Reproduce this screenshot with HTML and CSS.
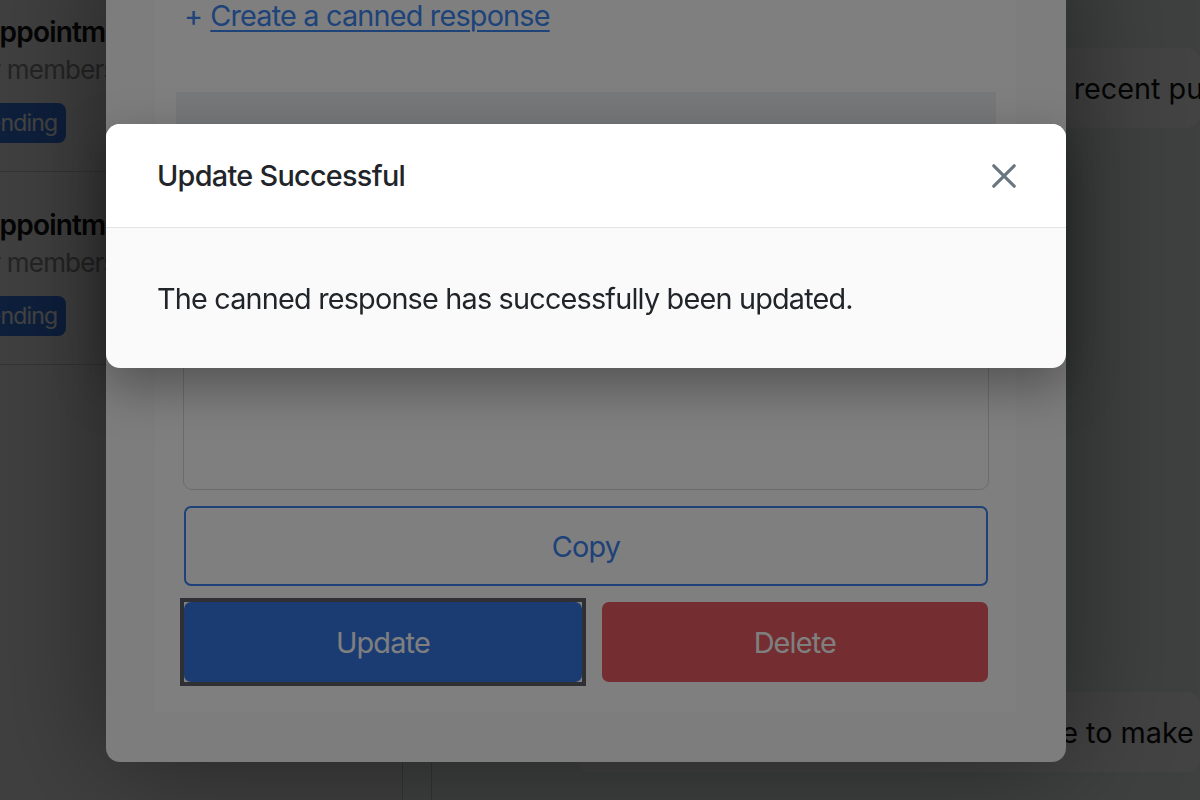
FILE: index.html
```html
<!DOCTYPE html>
<html lang="en">
<head>
<meta charset="utf-8">
<title>Canned responses</title>
<link rel="stylesheet" href="styles.css">
</head>
<body>
<div class="page">
  <aside class="sidebar">
    <div class="item-list">
      <div class="item">
        <div class="item-title">Appointment request</div>
        <div class="item-sub">For members only</div>
        <span class="badge">Pending</span>
      </div>
      <div class="item">
        <div class="item-title">Appointment request</div>
        <div class="item-sub">For members only</div>
        <span class="badge">Pending</span>
      </div>
    </div>
  </aside>
  <div class="gutter"></div>
  <main class="main">
    <div class="card card-top">View your recent purchases</div>
    <div class="card card-bottom">We would love to make it right</div>
  </main>
</div>

<div class="backdrop backdrop-1"></div>

<section class="modal modal-1">
  <div class="panel">
    <a class="create-link" href="#"><span class="plus">+</span><span class="link-text">Create a canned response</span></a>
    <div class="field-head"></div>
    <label class="field-label">Response</label>
    <div class="textarea"></div>
    <button class="btn btn-outline">Copy</button>
    <div class="btn-row">
      <div class="focus-ring"><button class="btn btn-primary">Update</button></div>
      <button class="btn btn-danger">Delete</button>
    </div>
  </div>
</section>

<div class="backdrop backdrop-2"></div>

<section class="modal modal-2">
  <header class="m2-header">
    <h5 class="m2-title">Update Successful</h5>
    <button class="close" aria-label="Close">
      <svg width="24" height="24" viewBox="0 0 24 24"><path d="M1.8 1.8L22.2 22.2M22.2 1.8L1.8 22.2" stroke="#6b7780" stroke-width="3.2" stroke-linecap="round" fill="none"/></svg>
    </button>
  </header>
  <div class="m2-body">The canned response has successfully been updated.</div>
</section>
</body>
</html>
```
FILE: styles.css
```css
* { box-sizing: border-box; }
html, body {
  margin: 0;
  width: 1200px;
  height: 800px;
  overflow: hidden;
}
body {
  font-family: Inter, "Noto Sans", sans-serif;
  letter-spacing: -0.8px;
  color: #212529;
  position: relative;
}

/* background page */
.page {
  display: flex;
  height: 800px;
  margin-left: -60px;
  width: 1260px;
  overflow: hidden;
  background: #eef5f5;
}
.sidebar {
  width: 463px;
  flex: none;
  background: #f1f1f1;
  border-right: 1px solid #c4c4c4;
  padding-left: 40px;
}
.item-list { margin-top: -21px; }
.item {
  height: 193px;
  border-bottom: 1px solid #c9c9c9;
  padding-top: 35px;
}
.item-title {
  font-size: 28px;
  font-weight: 600;
  line-height: 36px;
  color: #111;
  white-space: nowrap;
}
.item-sub {
  margin: 2px 0 0 -17px;
  font-size: 26px;
  line-height: 36px;
  color: #8a8a8a;
  white-space: nowrap;
}
.badge {
  display: inline-block;
  margin: 15px 0 0 -17px;
  background: #3578e5;
  color: #fff;
  font-size: 23px;
  line-height: 32px;
  padding: 4px 9px 4px 11px;
  border-radius: 8px;
}
.gutter {
  width: 29px;
  flex: none;
  border-right: 1px solid #c4c4c4;
  background: #eef1f1;
}
.main {
  flex: 1;
  min-width: 0;
  display: flex;
  flex-direction: column;
  padding: 48px 0 0 145px;
}
.card {
  background: #fff;
  border-radius: 14px;
  height: 80px;
  display: flex;
  align-items: center;
  font-size: 28.8px;
  letter-spacing: 0;
  color: #111;
  white-space: nowrap;
}
.card-top { padding-left: 353px; }
.card-bottom { margin-top: 564px; padding-left: 303px; }

/* backdrops */
.backdrop {
  position: fixed;
  inset: 0;
}
.backdrop-1 { background: rgba(0, 0, 0, 0.47); }
.backdrop-2 { background: rgba(0, 0, 0, 0.5); }

.modal {
  position: absolute;
  left: 106px;
  width: 960px;
  border-radius: 14px;
}

/* modal 1 */
.modal-1 {
  top: -60px;
  bottom: 38px;
  background: #fafafa;
  padding: 0 50px 50px 49px;
  display: flex;
  flex-direction: column;
  box-shadow: 0 0 120px rgba(0, 0, 0, 0.45);
}
.panel {
  flex: 1;
  background: #fff;
  padding: 54px 28px 30px 29px;
  display: flex;
  flex-direction: column;
}
.create-link {
  font-size: 28.8px;
  line-height: 43px;
  color: #3d86f2;
  text-decoration: none;
  align-self: flex-start;
}
.plus { margin-right: 8px; }
.link-text { text-decoration: underline; text-underline-offset: 4px; text-decoration-thickness: 2px; }
.field-head {
  margin: 55px -8px 0;
  height: 64px;
  background: #eef1f5;
}
.field-label {
  margin-top: 16px;
  font-size: 28.8px;
  line-height: 40px;
}
.textarea {
  flex: 1;
  margin: 8px -1px 0;
  border: 1px solid #d9d9d9;
  border-radius: 9px;
  background: #fff;
}
.btn {
  font-family: inherit;
  letter-spacing: inherit;
  font-size: 28.8px;
  height: 80px;
  border-radius: 7px;
  cursor: pointer;
}
.btn-outline {
  margin-top: 16px;
  background: #fff;
  border: 2px solid #3b82f0;
  color: #3b82f0;
}
.btn-row {
  display: flex;
  gap: 20px;
  margin-top: 16px;
}
.focus-ring {
  flex: 1 1 auto;
  display: flex;
  outline: 4px solid #5c6166;
}
.focus-ring .btn { flex: 1; }
.btn-primary {
  background: #3679e6;
  border: none;
  color: #fff;
}
.btn-danger {
  flex: 1 1 auto;
  background: #e95c63;
  border: none;
  color: #fff;
}

/* modal 2 */
.modal-2 {
  top: 124px;
  height: 244px;
  overflow: hidden;
  background: #fafafa;
  box-shadow: 0 18px 50px rgba(0, 0, 0, 0.35);
}
.m2-header {
  height: 104px;
  background: #fff;
  border-bottom: 1px solid #e3e3e3;
  display: flex;
  align-items: center;
  justify-content: space-between;
  padding: 0 50px 0 51px;
}
.m2-title {
  margin: 0;
  font-size: 28.8px;
  font-weight: 500;
  letter-spacing: -0.7px;
  line-height: 40px;
  color: #212529;
}
.close {
  background: none;
  border: none;
  padding: 0;
  width: 24px;
  height: 24px;
  display: flex;
}
.m2-body {
  height: 140px;
  display: flex;
  align-items: center;
  padding: 0 51px;
  font-size: 28.8px;
  color: #212529;
}
```
